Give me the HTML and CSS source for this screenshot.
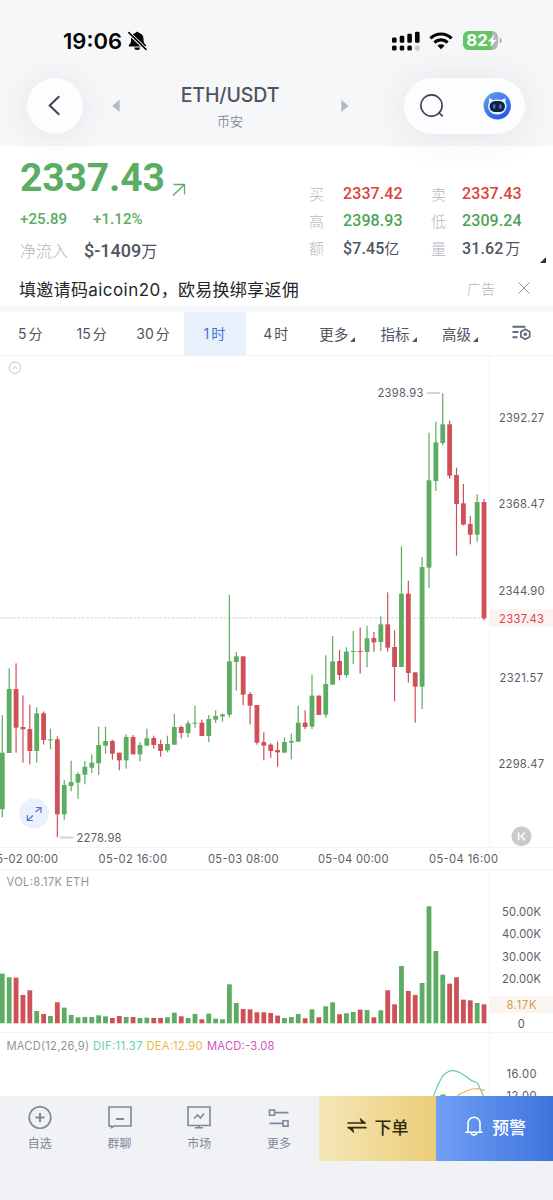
FILE: index.html
```html
<!DOCTYPE html>
<html lang="zh-CN">
<head>
<meta charset="utf-8">
<meta name="viewport" content="width=device-width, initial-scale=1">
<title>ETH/USDT</title>
<link rel="stylesheet" href="styles.css">
</head>
<body>
<div class="app">
  <header class="header">
    <div class="status">
      <span class="clock">19:06</span>
      <svg class="mute" width="20" height="20" viewBox="0 0 20 20"><path d="M9.200.8a1.900 1.900 0 0 1 1.800 1.300c2.900.7 4.500 3 4.500 5.700 0 3.500.6 4.600 2.300 6.100.5.500.4 1.500-.4 1.500H1.400c-.8 0-.9-1-.4-1.500 1.700-1.500 2.100-2.600 2.100-6.100 0-2.700 1.400-5 4.300-5.700A1.900 1.900 0 0 1 9.200.8Z" fill="#050505"/><path d="M6.300 16.500h5.800a2.900 2.500 0 0 1-5.800 0Z" fill="#050505"/><path d="M1 2 18 18.500" stroke="#f6f7f9" stroke-width="3.400"/><path d="M.8 1.600 18 18.400" stroke="#050505" stroke-width="1.500" stroke-linecap="round"/></svg>
      <span class="grow"></span>
      <svg class="signal" width="29" height="20" viewBox="0 0 29 20" fill="#050505"><rect x="0" y="6.500" width="4.600" height="5.300" rx="1.300"/><rect x="7.700" y="4.800" width="4.600" height="7" rx="1.300"/><rect x="15.300" y="2.800" width="4.600" height="9" rx="1.300"/><rect x="23" y=".7" width="4.600" height="11.100" rx="1.300"/><rect x="0" y="14.500" width="4.600" height="5" rx="1.500"/><rect x="7.700" y="14.500" width="4.600" height="5" rx="1.500"/><rect x="15.300" y="14.500" width="4.600" height="5" rx="1.500"/><rect x="23" y="14.500" width="4.600" height="5" rx="1.500" fill="#c9cacc"/></svg>
      <svg class="wifi" width="24" height="18" viewBox="0 0 24 18" fill="none" stroke="#050505" stroke-width="3.200"><path d="M1.400 6.300a15.200 15.200 0 0 1 21.200 0"/><path d="M5.400 10.500a9.600 9.600 0 0 1 13.200 0"/><path d="m12 17.300-3.500-3.500a5 5 0 0 1 7 0Z" fill="#050505" stroke="none"/></svg>
      <svg class="battery" width="40" height="20" viewBox="0 0 40 20"><defs><clipPath id="cell"><rect width="35" height="19" rx="6"/></clipPath></defs><g clip-path="url(#cell)"><rect width="35" height="19" fill="#b4b5b8"/><rect width="29" height="19" fill="#65c466"/></g><path d="M36.500 6.500q2.500.8 2.500 3t-2.500 3Z" fill="#b4b5b8"/><text x="3.300" y="15.300" class="battery-text" textLength="21.500" lengthAdjust="spacingAndGlyphs">82</text><path d="M31.500 3.500 24.800 10.500h3.700l-1.300 5.700 6.400-7.500h-3.700Z" fill="#fff"/></svg>
    </div>
    <div class="titlebar">
      <button class="round" aria-label="返回"><svg width="20" height="24" viewBox="0 0 20 24" fill="none" stroke="#3f424d" stroke-width="2"><path d="M14.300 2.200 4.700 11.500l9.600 9.300"/></svg></button>
      <svg class="prev" width="8" height="14" viewBox="0 0 8 14"><path d="M7.600.7v12.300L.2 7Z" fill="#b4b9c4"/></svg>
      <div class="pair"><b>ETH/USDT</b><span>币安</span></div>
      <svg class="next" width="8" height="14" viewBox="0 0 8 14"><path d="M.3.700v12.300L7.600 7Z" fill="#b4b9c4"/></svg>
      <div class="pill">
        <svg width="26" height="26" viewBox="0 0 26 26" fill="none" stroke="#3f424d" stroke-width="1.600"><circle cx="12.500" cy="12.500" r="10.600"/><path d="m19.300 19.200 4.400 4.200"/></svg>
        <svg width="28" height="28" viewBox="0 0 28 28"><defs><linearGradient id="orb" x1="0" y1="0" x2=".7" y2="1"><stop stop-color="#62a4f0"/><stop offset="1" stop-color="#2458e5"/></linearGradient></defs><circle cx="14.300" cy="13.700" r="13.700" fill="url(#orb)"/><path d="M6 6 10 8q4-1 8 0L22.500 6V10.500q2 4 0 7.500-2.500 4.500-8.200 4.500T6 18Q4 14.500 6 10.500Z" fill="#e8f1ff"/><rect x="6.600" y="9" width="15.400" height="11" rx="5.500" fill="#15213d"/><rect x="10" y="12.300" width="2.400" height="4.400" rx="1.200" fill="#287be9"/><rect x="16.200" y="12.300" width="2.400" height="4.400" rx="1.200" fill="#287be9"/></svg>
      </div>
    </div>
  </header>

  <section class="quote">
    <div class="price">
      <div class="last"><strong>2337.43</strong><svg width="14" height="14" viewBox="0 0 14 14" fill="none" stroke="#5aad62" stroke-width="1.300"><path d="M1.500 1.500h11v10M12.500 1.500 1 12.500"/></svg></div>
      <div class="change"><span>+25.89</span><span>+1.12%</span></div>
      <div class="flow"><span>净流入</span><b>$-1409<i>万</i></b></div>
    </div>
    <dl class="stats">
      <dt>买</dt><dd class="down">2337.42</dd><dt>卖</dt><dd class="down">2337.43</dd>
      <dt>高</dt><dd class="up">2398.93</dd><dt>低</dt><dd class="up">2309.24</dd>
      <dt>额</dt><dd>$7.45<i>亿</i></dd><dt>量</dt><dd>31.62<i class="gap">万</i></dd>
    </dl>
    <svg class="corner" width="6" height="6" viewBox="0 0 6 6"><path d="M6 0v6H0Z" fill="#30333b"/></svg>
  </section>

  <section class="promo">
    <p>填邀请码<span>aicoin20</span>，欧易换绑享返佣</p>
    <small>广告</small>
    <svg width="12" height="12" viewBox="0 0 12 12" stroke="#8c919b" stroke-width="1"><path d="m.5.5 11 11M11.500.5l-11 11"/></svg>
  </section>

  <nav class="tabs">
    <a>5<i>分</i></a><a>15<i>分</i></a><a>30<i>分</i></a><a class="on">1<i>时</i></a><a>4<i>时</i></a>
    <a class="menu">更多</a><a class="menu">指标</a><a class="menu">高级</a>
    <a class="tool"><svg width="20" height="16" viewBox="0 0 20 16" fill="none" stroke="#5d6a7c"><path d="M.5 1.800h13M.5 7h6M.5 12.300h5" stroke-width="2"/><path d="m13.300 4.300 4.400 2.500v5l-4.400 2.500-4.400-2.500v-5Z" stroke-width="1.700"/><circle cx="13.300" cy="9.300" r="1.300" fill="#5d6a7c"/></svg></a>
  </nav>

  <main class="chart">
    <svg width="553" height="741" viewBox="0 355 553 741">
      <g stroke="#f3f4f7">
        <path d="M0 355.500H553M0 847.500H553M0 869.500H553M0 1032.500H553"/>
        <path d="M489.500 355V847M489.500 870V1096"/>
      </g>
      <path d="M0 618H484" stroke="#d2d3d6" stroke-dasharray="3 1.300"/>
      <rect x="490" y="609" width="63" height="18" fill="#fdf3f2"/>
      <rect x="490" y="996" width="63" height="17" fill="#faf5f0"/>
      <g id="candles"></g>
      <g id="volumes"></g>
      <path d="M427 393H440M60 837.500H73.500" stroke="#d3d4d6" stroke-width="2"/>
      <path d="M433.500 1096C436 1089 440 1080 443.500 1075 449 1071 450 1070.500 452 1070.700 458 1070.500 462 1073.500 470 1079.500 473 1082 477 1082 477.500 1083L483.500 1096" fill="none" stroke="#63c9a6" stroke-width="1.200"/>
      <path d="M457 1096Q466 1089.500 477 1088.500L485 1090.500" fill="none" stroke="#e6b04f" stroke-width="1.200"/>
      <rect x="440.500" y="1094.500" width="5" height="2" fill="#5cad61"/>
      <g class="label">
        <text x="377.500" y="397" textLength="46">2398.93</text>
        <text x="76.500" y="842" textLength="45">2278.98</text>
        <text x="499" y="421.500" textLength="45">2392.27</text>
        <text x="498.500" y="508" textLength="46">2368.47</text>
        <text x="498.500" y="594.500" textLength="46">2344.90</text>
        <text x="499" y="622.500" textLength="45" class="now">2337.43</text>
        <text x="499.500" y="681.500" textLength="43.500">2321.57</text>
        <text x="498.500" y="768" textLength="45.500">2298.47</text>
        <text x="-11" y="863" textLength="69">05-02 00:00</text>
        <text x="98.500" y="863" textLength="68.500">05-02 16:00</text>
        <text x="208" y="863" textLength="70.500">05-03 08:00</text>
        <text x="318" y="863" textLength="70.500">05-04 00:00</text>
        <text x="429" y="863" textLength="69">05-04 16:00</text>
        <text x="502" y="916" textLength="39">50.00K</text>
        <text x="502" y="938.300" textLength="39">40.00K</text>
        <text x="502" y="960.500" textLength="39">30.00K</text>
        <text x="502" y="983" textLength="39">20.00K</text>
        <text x="506.500" y="1009" textLength="30" class="volnow">8.17K</text>
        <text x="517.700" y="1027.500">0</text>
        <text x="506.500" y="1077.500" textLength="30">16.00</text>
        <text x="506.500" y="1099.500" textLength="30">12.00</text>
      </g>
      <g class="legend">
        <text x="6.500" y="886" textLength="82.500">VOL:8.17K ETH</text>
        <text x="6.500" y="1050" textLength="82.500">MACD(12,26,9)</text>
        <text x="93" y="1050" textLength="49.500" class="dif">DIF:11.37</text>
        <text x="146.500" y="1050" textLength="56" class="dea">DEA:12.90</text>
        <text x="207" y="1050" textLength="67.500" class="macd">MACD:-3.08</text>
      </g>
      <g fill="none" stroke="#c4c5c8"><circle cx="15" cy="367.700" r="5.700"/><path d="m12.300 369 2.700-2.300 2.700 2.300"/></g>
      <circle cx="34" cy="813.500" r="15" fill="#eaf1fd"/>
      <path d="M35.500 812 41 807.500M35.800 807.500H41V813M33 815.500 27.300 820.500M27.300 815V820.500H33" fill="none" stroke="#5277bd" stroke-width="1.200"/>
      <circle cx="521.500" cy="836.300" r="10" fill="#c9cacc"/>
      <path d="M518.600 832.500V840.200M524.800 832.500 521.300 836.300 524.800 840.200" fill="none" stroke="#fff" stroke-width="1.600"/>
    </svg>
  </main>

  <footer class="dock">
    <a class="item"><svg width="24" height="24" viewBox="0 0 24 24" fill="none" stroke="#818999" stroke-width="1.600"><circle cx="12" cy="11.500" r="10.800"/><path d="M12 7v9M7.500 11.500h9" stroke-width="2"/></svg>自选</a>
    <a class="item"><svg width="24" height="24" viewBox="0 0 24 24" fill="none" stroke="#818999" stroke-width="1.600"><path d="M1 1H23V20H6L3.500 21.500V20H1Z"/><path d="M8 13h8" stroke-width="2"/></svg>群聊</a>
    <a class="item"><svg width="24" height="24" viewBox="0 0 24 24" fill="none" stroke="#818999" stroke-width="1.600"><path d="M1 1H23V19.500H1ZM12 19.500v2.500M8 21.800h8"/><path d="m7 12.500 3.500-3.500 3 3 3.500-4.500"/></svg>市场</a>
    <a class="item"><svg width="24" height="24" viewBox="0 0 24 24" fill="none" stroke="#818999" stroke-width="1.600"><path d="M2.500 4h5v5.300h-5ZM7.500 6.600h14M16 14.800h5v5.300h-5ZM2.500 17.400H16"/></svg>更多</a>
    <a class="trade"><svg width="20" height="18" viewBox="0 0 20 18" fill="none" stroke="#322910" stroke-width="1.700"><path d="M.5 6H18.500M.5 10.700H19.500"/><path d="M13.300 1.500 18.500 6H14.500ZM6.700 15.700 1.500 10.700H5.500Z" fill="#322910" stroke-width=".8"/></svg>下单</a>
    <a class="alert"><svg width="18" height="20" viewBox="0 0 18 20" fill="none" stroke="#fff" stroke-width="1.600"><path d="M.3 16.300H17.700M3 16V7.300a6 6 0 0 1 12 0V16M6.200 16.500q.3 2.600 2.800 2.600T11.800 16.500"/></svg>预警</a>
  </footer>
</div>
<script src="chart.js"></script>
</body>
</html>
```
FILE: styles.css
```css
* { box-sizing: border-box; }
body { margin: 0; background: #fff; font-family: Inter, "Noto Sans CJK SC", sans-serif; color: #50545f; }
button { border: 0; padding: 0; }
i { font-style: normal; font-weight: 400; }
svg { display: block; flex: none; }
.app { width: 553px; height: 1200px; overflow: hidden; display: flex; flex-direction: column; }

.header { height: 146px; flex: none; background: #f6f7f9; }
.status { height: 78px; padding: 4px 50px 0 63px; display: flex; align-items: center; }
.clock { font-size: 22px; font-weight: 600; color: #050505; letter-spacing: 0; width: 65px; }
.grow { flex: 1; }
.signal { margin-right: 8px; }
.wifi { margin-right: 10px; }
.battery-text { font: 700 16.5px Inter, sans-serif; fill: #fff; }
.titlebar { height: 56px; padding: 0 28px 0 27px; display: flex; align-items: center; }
.round { width: 56px; height: 56px; border-radius: 50%; background: #fcfdff; display: grid; place-items: center; box-shadow: 0 2px 32px rgba(60, 60, 65, .1); }
.prev { margin-left: 29px; }
.pair { width: 100px; margin: 0 61px 0 60px; display: flex; flex-direction: column; align-items: center; white-space: nowrap; }
.pair b { font-weight: 500; font-size: 19.5px; line-height: 28px; letter-spacing: -.1px; }
.pair span { font-size: 13px; line-height: 22px; color: #8992a3; padding-top: 1px; }
.pill { margin-left: auto; width: 121px; height: 56px; border-radius: 28px; padding: 0 14px 0 15px; background: #fcfdff; display: flex; align-items: center; justify-content: space-between; box-shadow: 0 2px 36px rgba(60, 60, 65, .1); }

.quote { height: 126px; flex: none; display: flex; padding: 8px 7px 0 20px; font-family: Roboto, "Noto Sans CJK SC", sans-serif; }
.price { width: 289px; }
.last { display: flex; height: 48px; gap: 8px; color: #5aad62; }
.last strong { font-size: 39px; line-height: 48px; letter-spacing: -.1px; width: 144px; }
.last svg { margin-top: 29px; }
.change { display: flex; height: 34px; align-items: center; color: #5aad62; font-size: 15px; font-weight: 500; letter-spacing: .1px; }
.change span { width: 73px; }
.flow { display: flex; height: 28px; align-items: center; }
.flow span { width: 64px; font-size: 16px; color: #b4b8c3; font-weight: 300; }
.flow b { font-size: 18px; font-weight: 500; letter-spacing: 0; }
.flow i { font-size: 16px; }
.stats { margin: 26px 0 0; display: grid; grid-template-columns: 34px 88px 31px 62px; grid-auto-rows: 27px; align-items: center; font-size: 16px; height: 81px; white-space: nowrap; }
.stats dt { color: #b4b8c3; font-size: 15px; font-weight: 300; }
.stats dd { margin: 0; font-weight: 500; letter-spacing: .1px; }
.stats i { font-size: 15px; }
.gap { margin-left: 2px; }
.stats .down { color: #dc4339; }
.stats .up { color: #4fa257; }
.corner { margin: 103px 0 0 auto; }

.promo { height: 40px; flex: none; padding: 2px 23px 4px 19px; display: flex; align-items: center; color: #24262b; border-bottom: 6px solid #f5f7fa; }
.promo p { margin: 0; flex: 1; font-size: 17px; letter-spacing: .3px; }
.promo span { letter-spacing: .45px; }
.promo small { font-size: 14px; color: #b4b8c0; font-weight: 300; margin-right: 23px; }

.tabs { height: 43px; flex: none; display: flex; font-size: 14px; }
.tabs a { width: 61.4px; display: flex; align-items: center; justify-content: center; padding: 0 1px 1px 0; }
.tabs i { font-size: 14px; margin-left: 2px; }
.tabs .on { color: #4273dd; background: #e8f0fc; }
.tabs .menu { font-size: 14.5px; }
.menu::after { content: ""; align-self: flex-end; margin: 0 0 12px 2px; border-bottom: 5px solid #50545f; border-left: 5px solid transparent; }
.tabs .tool { padding-left: 2px; }

.chart { height: 741px; flex: none; }
.label { font: 11.2px Inter, sans-serif; fill: #5a5d66; }
.label .now { fill: #dc4250; }
.label .volnow { fill: #d79c50; }
.legend { font: 11.2px Inter, sans-serif; fill: #92949a; }
.legend .dif { fill: #69cfb0; }
.legend .dea { fill: #eab94d; }
.legend .macd { fill: #cf55bb; }
.bull { fill: #5cad61; }
.bear { fill: #cf5157; }

.dock { height: 104px; flex: none; background: #f0f2f5; display: flex; align-items: flex-start; }
.item { width: 79.75px; height: 64px; padding-top: 10px; display: flex; flex-direction: column; align-items: center; gap: 5px; font-size: 12px; line-height: 18px; color: #818999; }
.trade, .alert { width: 117px; height: 65px; display: flex; align-items: center; justify-content: center; gap: 8px; font-size: 17px; font-weight: 500; }
.trade { padding: 0 0 5px 0; background: linear-gradient(90deg, #f5e7b7, #ebcd78); color: #322910; }
.alert { padding: 0 0 5px 2px; gap: 9px; background: linear-gradient(90deg, #709ff6, #3f74dd); color: #fff; }
```
FILE: chart.js
```js
// Each row: direction, high, low, body top, body bottom, volume.
// Lengths are in thirds of a pixel; prices are measured from y = 580.
const rows = [
["g",405,712,518,688,149],["g",265,519,327,519,138],["r",250,518,327,443,137],["r",346,548,441,448,85],
["r",374,553,447,513,99],["g",382,548,400,513,37],["r",394,494,400,480,28],["g",446,508,478,481,22],
["r",469,772,478,703,63],["g",600,719,615,703,47],["g",542,634,606,618,25],["g",577,657,582,608,18],
["g",543,613,560,584,19],["g",523,579,548,563,19],["g",440,585,495,550,24],["g",440,521,483,497,21],
["r",479,539,483,521,16],["r",518,571,518,541,22],["g",463,566,471,541,19],["r",465,523,471,523,19],
["g",486,544,495,523,16],["g",446,497,475,497,17],["r",467,506,474,495,16],["r",479,530,492,513,16],
["g",467,517,492,511,18],["g",402,494,441,494,32],["r",437,475,441,459,21],["g",422,472,430,459,16],
["g",377,443,428,431,28],["r",419,468,428,468,12],["g",405,486,417,468,29],["g",391,429,408,419,14],
["g",401,425,403,409,12],["g",45,412,244,404,117],["g",216,332,229,246,61],["r",229,376,229,344,43],
["r",336,433,342,377,42],["r",375,494,375,488,33],["r",457,541,486,497,33],["r",490,533,494,513,31],
["r",485,560,510,517,23],["g",472,518,486,518,16],["g",461,538,483,488,19],["g",377,485,428,485,28],
["r",391,447,428,441,15],["g",285,448,347,440,42],["r",346,405,347,405,18],["g",226,413,312,404,51],
["g",168,314,244,314,63],["r",210,301,243,285,27],["g",202,293,215,285,30],["g",153,252,213,216,34],
["r",142,281,213,215,41],["g",137,262,175,216,40],["r",156,215,174,187,18],["g",109,213,133,186,39],
["r",37,215,133,203,99],["r",151,364,201,261,57],["g",-101,261,41,261,172],["r",2,308,41,279,97],
["r",277,428,277,320,85],["g",-69,387,-39,320,121],["g",-442,25,-299,-37,351],["g",-475,-267,-413,-297,217],
["g",-560,-404,-467,-411,146],["r",-478,-304,-467,-313,119],["r",-337,-73,-315,-228,138],["r",-288,-164,-230,-166,71],
["r",-192,-107,-168,-136,69],["g",-257,-115,-234,-136,61],["r",-243,121,-234,115,57]
];
const candles = document.getElementById("candles");
const volumes = document.getElementById("volumes");
function bar(parent, kind, x, y, width, height) {
  const el = document.createElementNS("http://www.w3.org/2000/svg", "rect");
  const attrs = { x, y, width, height, class: kind === "g" ? "bull" : "bear" };
  for (const name in attrs) el.setAttribute(name, attrs[name]);
  parent.appendChild(el);
}
rows.forEach(([kind, high, low, top, bottom, volume], i) => {
  const x = 2.3 + i * 6.882;
  bar(candles, kind, x - 0.6, 580 + high / 3, 1.2, (low - high) / 3);
  bar(candles, kind, x - 2.4, 580 + top / 3, 4.8, Math.max(1, (bottom - top) / 3));
  bar(volumes, kind, x - 2.4, 1023.3 - volume / 3, 4.8, volume / 3);
});
```
